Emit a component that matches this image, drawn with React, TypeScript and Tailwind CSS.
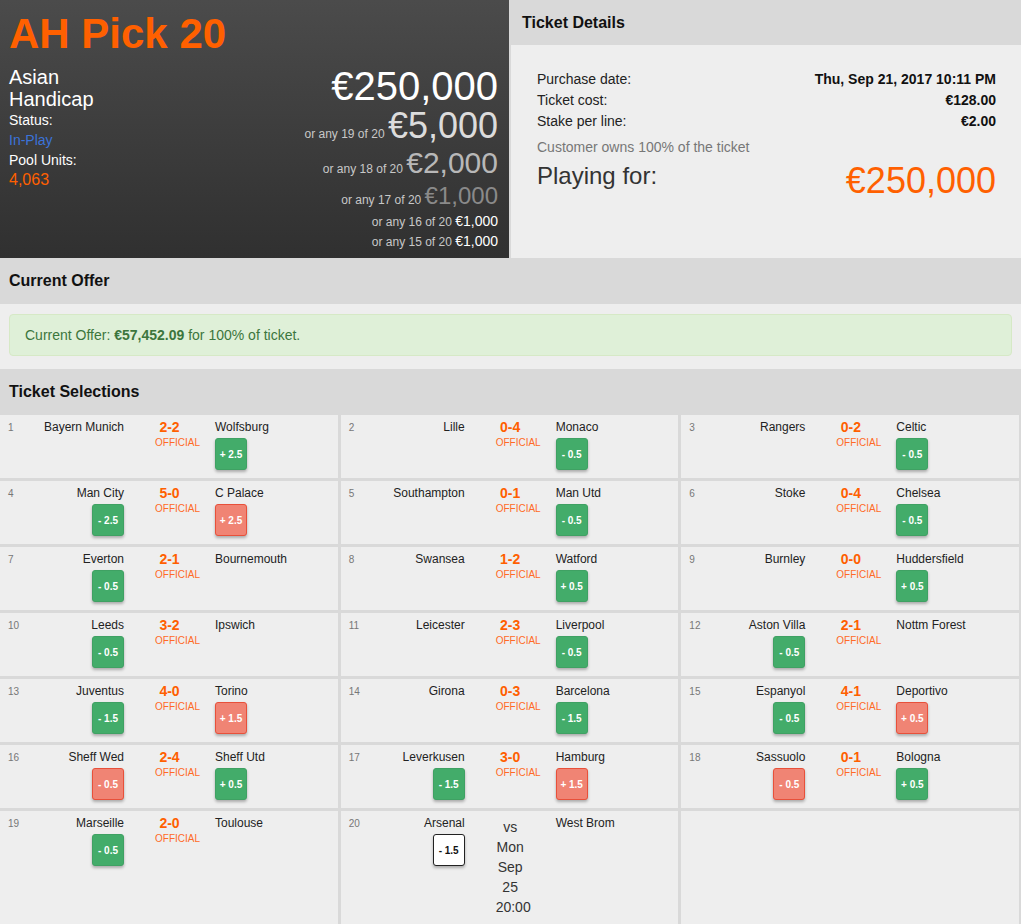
import React from 'react';

type Badge = { v: string; c: 'g' | 'r' | 'w' };

interface Match {
  n: number;
  home: string;
  away: string;
  score?: string;
  kickoff?: string;
  hb?: Badge;
  ab?: Badge;
}

const matches: Match[] = [
  { n: 1, home: 'Bayern Munich', away: 'Wolfsburg', score: '2-2', ab: { v: '+ 2.5', c: 'g' } },
  { n: 2, home: 'Lille', away: 'Monaco', score: '0-4', ab: { v: '- 0.5', c: 'g' } },
  { n: 3, home: 'Rangers', away: 'Celtic', score: '0-2', ab: { v: '- 0.5', c: 'g' } },
  { n: 4, home: 'Man City', away: 'C Palace', score: '5-0', hb: { v: '- 2.5', c: 'g' }, ab: { v: '+ 2.5', c: 'r' } },
  { n: 5, home: 'Southampton', away: 'Man Utd', score: '0-1', ab: { v: '- 0.5', c: 'g' } },
  { n: 6, home: 'Stoke', away: 'Chelsea', score: '0-4', ab: { v: '- 0.5', c: 'g' } },
  { n: 7, home: 'Everton', away: 'Bournemouth', score: '2-1', hb: { v: '- 0.5', c: 'g' } },
  { n: 8, home: 'Swansea', away: 'Watford', score: '1-2', ab: { v: '+ 0.5', c: 'g' } },
  { n: 9, home: 'Burnley', away: 'Huddersfield', score: '0-0', ab: { v: '+ 0.5', c: 'g' } },
  { n: 10, home: 'Leeds', away: 'Ipswich', score: '3-2', hb: { v: '- 0.5', c: 'g' } },
  { n: 11, home: 'Leicester', away: 'Liverpool', score: '2-3', ab: { v: '- 0.5', c: 'g' } },
  { n: 12, home: 'Aston Villa', away: 'Nottm Forest', score: '2-1', hb: { v: '- 0.5', c: 'g' } },
  { n: 13, home: 'Juventus', away: 'Torino', score: '4-0', hb: { v: '- 1.5', c: 'g' }, ab: { v: '+ 1.5', c: 'r' } },
  { n: 14, home: 'Girona', away: 'Barcelona', score: '0-3', ab: { v: '- 1.5', c: 'g' } },
  { n: 15, home: 'Espanyol', away: 'Deportivo', score: '4-1', hb: { v: '- 0.5', c: 'g' }, ab: { v: '+ 0.5', c: 'r' } },
  { n: 16, home: 'Sheff Wed', away: 'Sheff Utd', score: '2-4', hb: { v: '- 0.5', c: 'r' }, ab: { v: '+ 0.5', c: 'g' } },
  { n: 17, home: 'Leverkusen', away: 'Hamburg', score: '3-0', hb: { v: '- 1.5', c: 'g' }, ab: { v: '+ 1.5', c: 'r' } },
  { n: 18, home: 'Sassuolo', away: 'Bologna', score: '0-1', hb: { v: '- 0.5', c: 'r' }, ab: { v: '+ 0.5', c: 'g' } },
  { n: 19, home: 'Marseille', away: 'Toulouse', score: '2-0', hb: { v: '- 0.5', c: 'g' } },
  { n: 20, home: 'Arsenal', away: 'West Brom', kickoff: 'vs Mon Sep 25 20:00', hb: { v: '- 1.5', c: 'w' } },
];

function HcpBadge({ b }: { b: Badge }) {
  const cls =
    b.c === 'g'
      ? 'bg-[#43ac6a] border-[#3fa163] text-white'
      : b.c === 'r'
      ? 'bg-[#f08474] border-[#e8503a] text-white'
      : 'bg-white border-[#222] text-[#111]';
  return (
    <div
      className={`mt-[2px] w-[32px] h-[32px] rounded-[3px] border flex items-center justify-center text-[10px] font-bold shadow-[0_2px_3px_rgba(0,0,0,0.28)] ${cls}`}
    >
      {b.v}
    </div>
  );
}

function MatchCell({ m }: { m?: Match }) {
  if (!m) return <div className="bg-[#eeeeee]" />;
  return (
    <div className="bg-[#eeeeee] pt-[4px] pb-[8px] grid grid-cols-[124px_29px_1fr] gap-x-[31px] text-[12px] leading-[17px] text-[#222]">
      <div className="flex">
        <span className="pl-[8px] text-[10px] text-[#777]">{m.n}</span>
        <div className="flex-1 flex flex-col items-end">
          <span>{m.home}</span>
          {m.hb && <HcpBadge b={m.hb} />}
        </div>
      </div>
      <div className="text-center">
        {m.score ? (
          <>
            <div className="text-[14px] font-bold text-[#ff5f00]">{m.score}</div>
            <div className="text-[10px] leading-[14px] text-[#ff6a26]">OFFICIAL</div>
          </>
        ) : (
          <div className="mt-[2px] text-[14px] leading-[20px] text-[#333]">{m.kickoff}</div>
        )}
      </div>
      <div className="flex flex-col items-start">
        <span>{m.away}</span>
        {m.ab && <HcpBadge b={m.ab} />}
      </div>
    </div>
  );
}

function SectionHeader({ title }: { title: string }) {
  return (
    <div className="h-[46px] bg-[#d9d9d9] flex items-center pl-[9px] text-[16px] font-bold text-[#111]">
      {title}
    </div>
  );
}

export default function App() {
  const cells: (Match | undefined)[] = [...matches, undefined];

  return (
    <div className="min-h-screen bg-[#d9d9d9] font-['Liberation_Sans',Arial,sans-serif]">
      {/* pool header + ticket details */}
      <div className="flex h-[258px]">
        <div className="w-[509px] bg-linear-to-b from-[#4b4b4b] to-[#303030] pt-[11px] px-[9px] pr-[11px]">
          <div className="text-[42px] leading-[46px] font-bold text-[#ff6000]">AH Pick 20</div>
          <div className="flex mt-[9px]">
            <div className="w-[100px] text-white">
              <div className="text-[20px] leading-[22px]">Asian Handicap</div>
              <div className="text-[14px] leading-[20px]">Status:</div>
              <div className="text-[14px] leading-[20px] text-[#3b73d9]">In-Play</div>
              <div className="text-[14px] leading-[20px]">Pool Units:</div>
              <div className="text-[16px] leading-[20px] text-[#ff6000]">4,063</div>
            </div>
            <div className="flex-1 text-right">
              <div className="text-[40px] leading-[41px] text-white">€250,000</div>
              <div className="text-[36px] leading-[38px] text-[#dcdcdc]">
                <span className="text-[12px] leading-none text-[#c8c8c8]">or any 19 of 20 </span>€5,000
              </div>
              <div className="text-[30px] leading-[36px] text-[#b8b8b8]">
                <span className="text-[12px] leading-none text-[#c8c8c8]">or any 18 of 20 </span>€2,000
              </div>
              <div className="text-[24px] leading-[30px] text-[#8a8a8a]">
                <span className="text-[12px] leading-none text-[#c8c8c8]">or any 17 of 20 </span>€1,000
              </div>
              <div className="text-[14px] leading-[20px] text-white">
                <span className="text-[12px] leading-none text-[#c8c8c8]">or any 16 of 20 </span>€1,000
              </div>
              <div className="text-[14px] leading-[20px] text-white">
                <span className="text-[12px] leading-none text-[#c8c8c8]">or any 15 of 20 </span>€1,000
              </div>
            </div>
          </div>
        </div>

        <div className="flex-1 ml-[2px] flex flex-col bg-[#eeeeee]">
          <div className="h-[45px] bg-[#d9d9d9] flex items-center pl-[11px] text-[16px] font-bold text-[#111]">
            Ticket Details
          </div>
          <div className="pt-[24px] pl-[26px] pr-[25px] text-[14px] leading-[21px] text-[#222]">
            <div className="flex justify-between">
              <span>Purchase date:</span>
              <span className="font-bold text-[#111]">Thu, Sep 21, 2017 10:11 PM</span>
            </div>
            <div className="flex justify-between">
              <span>Ticket cost:</span>
              <span className="font-bold text-[#111]">€128.00</span>
            </div>
            <div className="flex justify-between">
              <span>Stake per line:</span>
              <span className="font-bold text-[#111]">€2.00</span>
            </div>
            <div className="mt-[5px] text-[#777]">Customer owns 100% of the ticket</div>
            <div className="mt-[3px] flex justify-between items-start">
              <span className="text-[24px] leading-[30px] text-[#333]">Playing for:</span>
              <span className="text-[36px] leading-[40px] text-[#ff6000]">€250,000</span>
            </div>
          </div>
        </div>
      </div>

      {/* current offer */}
      <SectionHeader title="Current Offer" />
      <div className="bg-[#eeeeee] pt-[10px] pb-[13px] px-[9px]">
        <div className="border border-[#d6e9c6] bg-[#dff0d8] rounded-[4px] py-[10px] px-[15px] text-[14px] leading-[20px] text-[#3c763d]">
          Current Offer: <b>€57,452.09</b> for 100% of ticket.
        </div>
      </div>

      {/* selections */}
      <SectionHeader title="Ticket Selections" />
      <div className="grid grid-cols-3 gap-[3px] pr-[2px]">
        {cells.map((m, i) => (
          <MatchCell key={i} m={m} />
        ))}
      </div>
    </div>
  );
}
